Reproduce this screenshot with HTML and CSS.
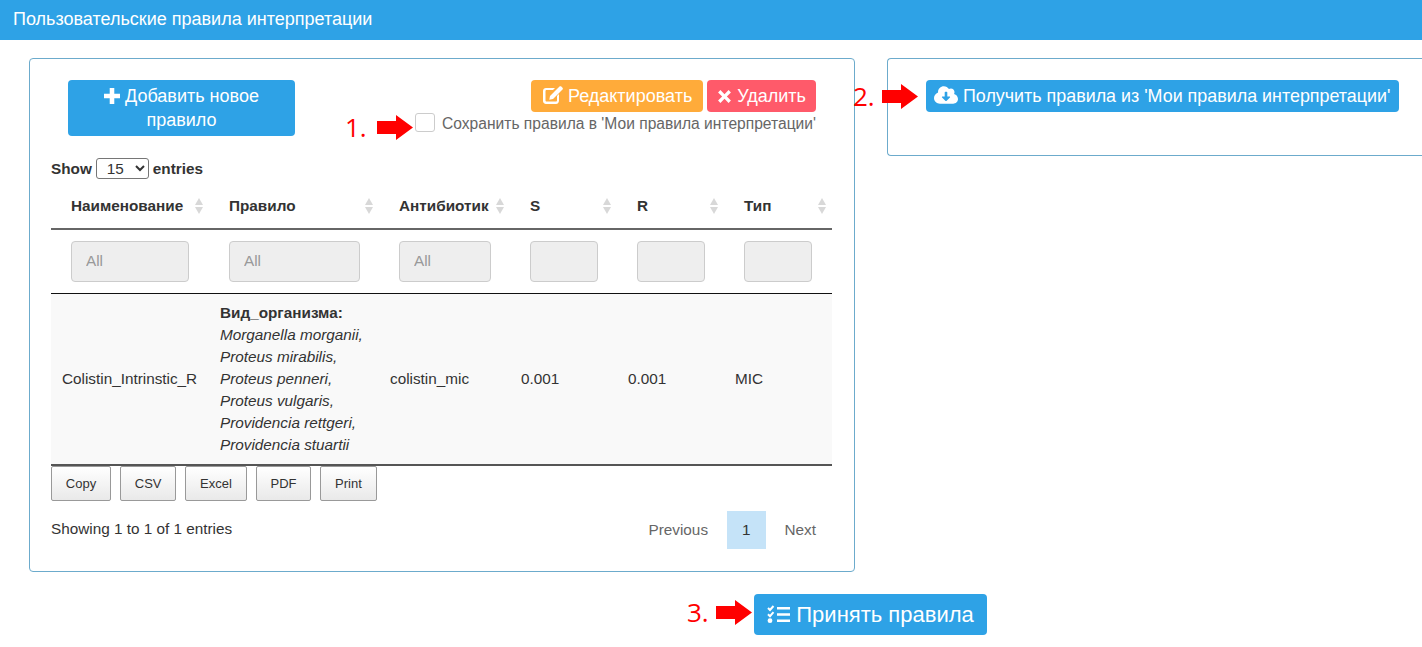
FILE: index.html
```html
<!DOCTYPE html>
<html lang="en">
<head>
  <meta charset="UTF-8">
  <title>Пользовательские правила интерпретации</title>
  <link rel="stylesheet" href="styles.css">
</head>
<body>

  <header class="topbar">Пользовательские правила интерпретации</header>

  <div class="panels">
    <section class="panel panel-rules">
      <div class="rules-top">
        <button class="btn btn-blue btn-add">
          <svg class="icon" viewBox="0 0 14 14" width="16" height="16"><path d="M5 0h4v5h5v4H9v5H5V9H0V5h5z" fill="#fff"/></svg>
          Добавить новое правило
        </button>
        <div class="rules-actions">
          <div class="action-btns">
            <button class="btn btn-orange">
              <svg class="icon" viewBox="0 0 20 18" width="20" height="18"><path d="M3 2h9L10 4H3.500C3 4 2.500 4.500 2.500 5v9.500c0 .5.500 1 1 1H13c.5 0 1-.5 1-1V10l2-2v6.500C16 16.400 14.900 18 13 18H3c-1.700 0-3-1.400-3-3V5c0-1.700 1.300-3 3-3z" fill="#fff"/><path d="M15.500 1.500l3 3-8.500 8.500-3.700.7.700-3.700zM16.500.5c.5-.5 1.300-.5 1.800 0l1.200 1.200c.5.500.5 1.300 0 1.800l-1 1-3-3z" fill="#fff"/></svg>
              Редактировать
            </button>
            <button class="btn btn-red">
              <svg class="icon" viewBox="0 0 14 14" width="15" height="15"><path d="M3.200 1L7 4.800 10.800 1 13 3.200 9.200 7 13 10.800 10.800 13 7 9.200 3.200 13 1 10.800 4.800 7 1 3.200z" fill="#fff"/></svg>
              Удалить
            </button>
          </div>
          <label class="save-check">
            <span class="fake-check"></span>
            Сохранить правила в 'Мои правила интерпретации'
          </label>
        </div>
      </div>

      <div class="length-row">
        Show
        <select class="length-select">
          <option>15</option>
        </select>
        entries
      </div>

      <table class="rules-table">
        <colgroup>
          <col class="col-name">
          <col class="col-rule">
          <col class="col-ab">
          <col class="col-s">
          <col class="col-r">
          <col class="col-type">
        </colgroup>
        <thead>
          <tr class="head-row">
            <th><div class="th-inner">Наименование <span class="sort"></span></div></th>
            <th><div class="th-inner">Правило <span class="sort"></span></div></th>
            <th><div class="th-inner">Антибиотик <span class="sort"></span></div></th>
            <th><div class="th-inner">S <span class="sort"></span></div></th>
            <th><div class="th-inner">R <span class="sort"></span></div></th>
            <th><div class="th-inner">Тип <span class="sort"></span></div></th>
          </tr>
          <tr class="filter-row">
            <td><input class="filter" placeholder="All" disabled></td>
            <td><input class="filter" placeholder="All" disabled></td>
            <td><input class="filter" placeholder="All" disabled></td>
            <td><input class="filter" disabled></td>
            <td><input class="filter" disabled></td>
            <td><input class="filter" disabled></td>
          </tr>
        </thead>
        <tbody>
          <tr class="data-row">
            <td>Colistin_Intrinstic_R</td>
            <td>
              <strong>Вид_организма:</strong><br>
              <em>Morganella morganii,<br>Proteus mirabilis,<br>Proteus penneri,<br>Proteus vulgaris,<br>Providencia rettgeri,<br>Providencia stuartii</em>
            </td>
            <td>colistin_mic</td>
            <td>0.001</td>
            <td>0.001</td>
            <td>MIC</td>
          </tr>
        </tbody>
      </table>

      <div class="export-btns">
        <button class="export">Copy</button>
        <button class="export">CSV</button>
        <button class="export">Excel</button>
        <button class="export">PDF</button>
        <button class="export">Print</button>
      </div>

      <div class="table-foot">
        <div class="info">Showing 1 to 1 of 1 entries</div>
        <div class="pager">
          <span class="page">Previous</span>
          <span class="page page-current">1</span>
          <span class="page">Next</span>
        </div>
      </div>
    </section>

    <section class="panel panel-fetch">
      <button class="btn btn-blue btn-fetch">
        <svg class="icon" viewBox="0 0 22 16" width="24" height="18"><path fill-rule="evenodd" fill="#fff" d="M18.400 7C18.700 6.400 18.800 5.800 18.800 5.200 18.800 3.500 17.300 2 15.500 2c-.7 0-1.300.2-1.800.6C12.700 1 11 0 9 0 6.100 0 3.700 2.300 3.700 5.200v.4C1.600 6.400 0 8.400 0 10.800 0 13.700 2.500 16 5.500 16h12.100C20 16 22 14.100 22 11.700 22 9.500 20.500 7.500 18.400 7zM14.600 10.300l-3.200 3.100c-.2.2-.6.2-.8 0L7.400 10.300c-.4-.4-.1-1 .4-1h2V5.700c0-.3.300-.6.600-.6h1.200c.3 0 .6.300.6.600v3.600h2c.5 0 .8.600.4 1z"/></svg>
        Получить правила из 'Мои правила интерпретации'
      </button>
    </section>
  </div>

  <div class="accept-row">
    <button class="btn btn-blue btn-accept">
      <svg class="icon" viewBox="0 0 23 19" width="23" height="19"><path d="M10 2h13v2.600H10zM10 8.200h13v2.600H10zM10 14.400h13v2.600H10z" fill="#fff"/><path d="M1 3l2 2 3.500-4M1 9.200l2 2 3.500-4" fill="none" stroke="#fff" stroke-width="2"/><circle cx="3" cy="15.700" r="2.400" fill="#fff"/></svg>
      Принять правила
    </button>
  </div>

  <!-- numbered callouts drawn over the screenshot -->
  <div class="note note-1">
    <span class="note-num">1.</span>
    <svg class="arrow" viewBox="0 0 36 25" width="36" height="25"><path d="M0 6h19V0l17 12.500-17 12.500v-6H0z" fill="#f00"/></svg>
  </div>
  <div class="note note-2">
    <span class="note-num">2.</span>
    <svg class="arrow" viewBox="0 0 36 25" width="36" height="25"><path d="M0 6h19V0l17 12.500-17 12.500v-6H0z" fill="#f00"/></svg>
  </div>
  <div class="note note-3">
    <span class="note-num">3.</span>
    <svg class="arrow" viewBox="0 0 36 25" width="36" height="25"><path d="M0 6h19V0l17 12.500-17 12.500v-6H0z" fill="#f00"/></svg>
  </div>

</body>
</html>
```

FILE: styles.css
```css
html, body {
  height: 647px;
  overflow: hidden;
}
body {
  font-family: "Liberation Sans", Arial, sans-serif;
  font-size: 15.3px;
  margin: 0;
  padding: 0;
  color: #333;
  background: #fff;
  position: relative;
}
.topbar {
  height: 40px;
  line-height: 39px;
  padding-left: 13px;
  background: #2ea2e6;
  color: #fff;
  font-size: 18px;
}
.panels {
  display: flex;
  gap: 32px;
  padding: 18px 0 0 29px;
  align-items: flex-start;
}
.panel {
  border: 1px solid #6cabcc;
  border-radius: 4px;
  box-sizing: border-box;
}
.panel-rules {
  flex: none;
  width: 826px;
  height: 514px;
  padding: 21px 22px 0 21px;
}
.panel-fetch {
  flex: 1;
  height: 98px;
  padding: 21px 0 0 38px;
  border-right: none;
  border-radius: 4px 0 0 4px;
}
.btn {
  border: none;
  border-radius: 4px;
  color: #fff;
  font-family: inherit;
  font-size: 18px;
  cursor: pointer;
  height: 32px;
  padding: 0 11px;
  white-space: nowrap;
}
.btn-blue {
  background: #2ea2e6;
}
.btn-orange {
  background: #ffab3a;
  padding: 0 11px 0 12px;
}
.btn-red {
  background: #ff5a6a;
  padding: 0 10px;
}
.btn-fetch {
  padding: 0 9px 0 8px;
  font-size: 17.9px;
}
.icon {
  vertical-align: -2px;
}
.rules-top {
  display: flex;
  justify-content: space-between;
  padding-left: 17px;
  height: 78px;
}
.btn-add {
  width: 227px;
  height: 56px;
  line-height: 24px;
  padding: 0 20px;
  white-space: normal;
}
.rules-actions {
  display: flex;
  flex-direction: column;
  align-items: flex-end;
  margin-right: 16px;
}
.action-btns {
  display: flex;
  gap: 4px;
}
.save-check {
  display: flex;
  align-items: center;
  gap: 7px;
  margin-top: 2px;
  color: #666;
  font-size: 15.6px;
  height: 20px;
  white-space: nowrap;
}
.fake-check {
  width: 18px;
  height: 17px;
  margin-top: -4px;
  border: 1px solid #ccc;
  border-radius: 3px;
  background: #fff;
}
.length-row {
  display: flex;
  align-items: center;
  gap: 4px;
  font-weight: bold;
  height: 21px;
}
.length-select {
  width: 53px;
  height: 21px;
  font-family: inherit;
  font-size: 15.3px;
  background: #fff;
  color: #333;
  border: 1px solid #767676;
  border-radius: 3px;
  padding-left: 6px;
}
.rules-table {
  table-layout: fixed;
  width: 781px;
  border-collapse: collapse;
  margin-top: 8px;
}
.col-name { width: 158px; }
.col-rule { width: 170px; }
.col-ab { width: 131px; }
.col-s, .col-r { width: 107px; }
.col-type { width: 108px; }
.head-row th {
  height: 42px;
  padding: 0 6px 3px 20px;
  text-align: left;
  border-bottom: 2px solid #666;
  box-sizing: border-box;
}
.th-inner {
  display: flex;
  justify-content: space-between;
  align-items: center;
  white-space: nowrap;
}
.sort {
  display: flex;
  flex-direction: column;
  gap: 2px;
  flex: none;
}
.sort::before,
.sort::after {
  content: "";
  border-left: 4.5px solid transparent;
  border-right: 4.5px solid transparent;
}
.sort::before {
  border-bottom: 7px solid #d8d8d8;
}
.sort::after {
  border-top: 7px solid #d8d8d8;
}
.filter-row td {
  height: 64px;
  padding: 0 19px 0 20px;
  border-bottom: 1px solid #111;
  box-sizing: border-box;
}
.filter-row td:first-child,
.filter-row td:last-child {
  padding-right: 20px;
}
.filter {
  width: 100%;
  height: 41px;
  box-sizing: border-box;
  background: #eee;
  border: 1px solid #ccc;
  border-radius: 4px;
  padding: 0 14px;
  font-family: inherit;
  font-size: 15.3px;
  display: block;
}
.filter::placeholder {
  color: #999;
  opacity: 1;
}
.data-row td {
  background: #f9f9f9;
  padding: 8px 11px;
  line-height: 22px;
  border-bottom: 2px solid #555;
}
.export-btns {
  display: flex;
  gap: 9px;
}
.export {
  height: 35px;
  padding: 0 13.8px;
  font-family: inherit;
  font-size: 13px;
  color: #333;
  border: 1px solid #999;
  border-radius: 2px;
  background: linear-gradient(to bottom, #fff, #e9e9e9);
}
.table-foot {
  display: flex;
  justify-content: space-between;
  width: 781px;
  margin-top: 10px;
}
.info {
  padding-top: 9px;
}
.pager {
  display: flex;
  gap: 2px;
}
.page {
  height: 38px;
  line-height: 38px;
  padding: 0 16px;
  color: #666;
}
.page-current {
  background: #c5e3f8;
  color: #333;
  padding: 0 15.500px;
  margin: 0 .5px;
}
.accept-row {
  padding: 22px 0 0 754px;
}
.btn-accept {
  width: 233px;
  height: 41px;
  font-size: 22px;
  padding: 0;
}
.note {
  position: absolute;
  display: flex;
  align-items: center;
  gap: 10px;
  color: #f00;
  font-family: "Open Sans", sans-serif;
  font-size: 26px;
}
.note-num {
  line-height: 25px;
}
.note-1 { left: 345px; top: 115px; }
.note-2 { left: 853px; top: 84px; gap: 7px; }
.note-3 { left: 687px; top: 600px; gap: 7px; }
```
